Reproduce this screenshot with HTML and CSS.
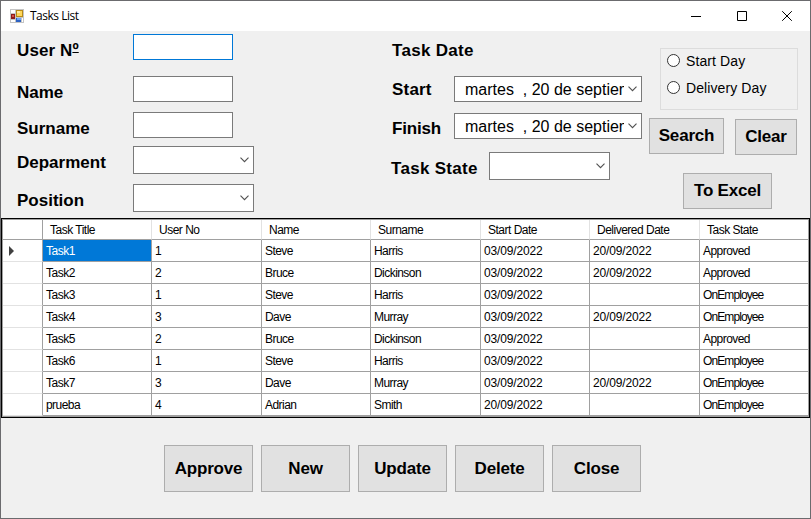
FILE: index.html
```html
<!DOCTYPE html>
<html lang="en">
<head>
<meta charset="utf-8">
<title>Tasks List</title>
<link rel="stylesheet" href="styles.css">
</head>
<body>
<div class="window">
  <header class="titlebar">
    <svg class="app-icon" width="14" height="14" viewBox="0 0 14 14" shape-rendering="crispEdges">
      <path fill="#c4c4c4" d="M0 0h14v14H0z"/>
      <path fill="#fff" d="M1 1h4v3H1zM1 11h4v2H1zM12 9h1v4h-1z"/>
      <path fill="#b88a16" d="M6 1h7v7H6z"/><path fill="#ffd75a" d="M7 2h5v5H7z"/><path fill="#ffeaa0" d="M7 2h3v2H7z"/>
      <path fill="#8e1b1b" d="M1 5h4v5H1z"/><path fill="#d65145" d="M2 6h2v2H2z"/>
      <path fill="#2c62c4" d="M6 9h5v4H6z"/><path fill="#6fa4f5" d="M7 9h4v2H7z"/>
    </svg>
    <span class="title">Tasks List</span>
    <div class="controls">
      <svg width="10" height="10" viewBox="0 0 10 10"><path d="M0 5.5h10"/></svg>
      <svg width="10" height="10" viewBox="0 0 10 10"><path d="M.5.5h9v9h-9z"/></svg>
      <svg width="10" height="10" viewBox="0 0 10 10"><path d="M.2.2l9.6 9.6M9.8.2L.2 9.8"/></svg>
    </div>
  </header>

  <section class="filters">
    <div class="person">
      <div class="row r-user"><label>User N<span class="ord">º</span></label><div class="input focus"></div></div>
      <div class="row r-name"><label>Name</label><div class="input"></div></div>
      <div class="row r-surname"><label>Surname</label><div class="input"></div></div>
      <div class="row r-dep"><label>Deparment</label><div class="combo"><svg class="chev" width="9" height="6" viewBox="0 0 9 6"><path d="M.5.7l4 4 4-4"/></svg></div></div>
      <div class="row r-pos"><label>Position</label><div class="combo"><svg class="chev" width="9" height="6" viewBox="0 0 9 6"><path d="M.5.7l4 4 4-4"/></svg></div></div>
    </div>
    <div class="dates">
      <div class="heading">Task Date</div>
      <div class="row r-start"><label>Start</label><div class="date"><span>martes  , 20 de septiem</span><svg class="chev" width="9" height="6" viewBox="0 0 9 6"><path d="M.5.7l4 4 4-4"/></svg></div></div>
      <div class="row r-finish"><label>Finish</label><div class="date"><span>martes  , 20 de septiem</span><svg class="chev" width="9" height="6" viewBox="0 0 9 6"><path d="M.5.7l4 4 4-4"/></svg></div></div>
      <div class="row r-state"><label>Task State</label><div class="combo"><svg class="chev" width="9" height="6" viewBox="0 0 9 6"><path d="M.5.7l4 4 4-4"/></svg></div></div>
    </div>
    <div class="actions">
      <div class="radios">
        <div class="radio"><i></i><span>Start Day</span></div>
        <div class="radio"><i></i><span>Delivery Day</span></div>
      </div>
      <div class="pair"><button class="search">Search</button><button class="clear">Clear</button></div>
      <button class="excel">To Excel</button>
    </div>
  </section>

  <section class="grid-frame">
    <table class="grid">
      <colgroup><col class="c-mark"><col class="c-title"><col class="c-no"><col class="c-title"><col class="c-no"><col class="c-title"><col class="c-no"><col class="c-title"></colgroup>
      <thead><tr><th></th><th>Task Title</th><th>User No</th><th>Name</th><th>Surname</th><th>Start Date</th><th>Delivered Date</th><th>Task State</th></tr></thead>
      <tbody>
        <tr><td class="mark"><svg width="5" height="10" viewBox="0 0 5 10"><path d="M0 0l5 5-5 5z" fill="#404040"/></svg></td><td class="task selected">Task1</td><td>1</td><td>Steve</td><td>Harris</td><td class="day">03/09/2022</td><td class="day">20/09/2022</td><td class="state">Approved</td></tr>
        <tr><td class="mark"></td><td class="task">Task2</td><td>2</td><td>Bruce</td><td>Dickinson</td><td class="day">03/09/2022</td><td class="day">20/09/2022</td><td class="state">Approved</td></tr>
        <tr><td class="mark"></td><td class="task">Task3</td><td>1</td><td>Steve</td><td>Harris</td><td class="day">03/09/2022</td><td></td><td class="state emp">OnEmployee</td></tr>
        <tr><td class="mark"></td><td class="task">Task4</td><td>3</td><td>Dave</td><td>Murray</td><td class="day">03/09/2022</td><td class="day">20/09/2022</td><td class="state emp">OnEmployee</td></tr>
        <tr><td class="mark"></td><td class="task">Task5</td><td>2</td><td>Bruce</td><td>Dickinson</td><td class="day">03/09/2022</td><td></td><td class="state">Approved</td></tr>
        <tr><td class="mark"></td><td class="task">Task6</td><td>1</td><td>Steve</td><td>Harris</td><td class="day">03/09/2022</td><td></td><td class="state emp">OnEmployee</td></tr>
        <tr><td class="mark"></td><td class="task">Task7</td><td>3</td><td>Dave</td><td>Murray</td><td class="day">03/09/2022</td><td class="day">20/09/2022</td><td class="state emp">OnEmployee</td></tr>
        <tr><td class="mark"></td><td>prueba</td><td>4</td><td>Adrian</td><td>Smith</td><td class="day">20/09/2022</td><td></td><td class="state emp">OnEmployee</td></tr>
      </tbody>
    </table>
  </section>

  <footer class="commands">
    <button>Approve</button><button>New</button><button>Update</button><button>Delete</button><button>Close</button>
  </footer>
</div>
</body>
</html>
```

FILE: styles.css
```css
* { box-sizing: border-box; }
body { margin: 0; overflow: hidden; font-family: "Liberation Sans", Arial, sans-serif; color: #000; }
.window { width: 811px; height: 519px; background: #f0f0f0; border: 1px solid #6b6b6e; }

.titlebar { height: 30px; background: #fff; display: flex; align-items: center; padding: 0 18px 0 9px; }
.title { margin-left: 6px; font: 12px/16px "Open Sans", sans-serif; letter-spacing: -0.5px; }
.controls { margin-left: auto; display: flex; gap: 35.5px; }
.controls svg { fill: none; stroke: #000; }

.filters { height: 187px; display: flex; }
.row { display: flex; }
label, .heading { font-size: 17px; line-height: 20px; font-weight: bold; white-space: nowrap; }
.ord { text-decoration: underline; text-decoration-thickness: 1px; text-underline-offset: -4px; text-decoration-skip-ink: none; }
.person { width: 374px; padding: 3px 0 0 16px; }
.person label { width: 116px; height: 26px; padding-top: 7px; }
.r-user label { letter-spacing: 0.1px; }
.input { width: 100px; height: 26px; background: #fff; border: 1px solid #7a7a7a; }
.input.focus { border-color: #0078d7; }
.r-user { height: 26px; }
.r-name { margin-top: 16px; }
.r-surname { margin-top: 10px; }
.row.r-name, .row.r-surname { height: 26px; }
.r-dep { margin-top: 8px; }
.r-pos { margin-top: 10px; }
.combo { width: 121px; height: 28px; background: #fff; border: 1px solid #7a7a7a; display: flex; align-items: center; justify-content: flex-end; padding-right: 4px; }
.chev { flex: none; fill: none; stroke: #505050; stroke-width: 1.1; }

.dates { width: 274px; padding: 10px 0 0 17px; }
.heading { letter-spacing: 0.3px; }
.dates label { width: 62px; letter-spacing: 0.2px; }
.r-start { margin-top: 15px; }
.r-start label { padding-top: 4px; }
.r-finish { margin-top: 11px; }
.r-finish label { padding-top: 6px; letter-spacing: -0.2px; }
.r-state { margin-top: 13px; margin-left: -1px; }
.r-state label { width: 98px; padding-top: 7px; letter-spacing: 0.3px; }
.date { width: 188px; height: 26px; background: #fff; border: 1px solid #7a7a7a; display: flex; align-items: center; justify-content: space-between; padding: 0 4px 0 10px; }
.date span { width: 159px; overflow: hidden; white-space: pre; font-size: 16px; line-height: 20px; padding-top: 1px; }

.actions { flex: 1; padding-top: 17px; }
.radios { width: 138px; height: 62px; margin-left: 11px; border: 1px solid #dcdcdc; padding: 1px 0 0 6px; }
.radio { height: 20px; display: flex; align-items: center; font-size: 14px; }
.radio + .radio { margin-top: 7px; }
.radio i { width: 13px; height: 13px; border: 1px solid #333; border-radius: 50%; background: #fff; }
.radio span { margin-left: 6px; padding-top: 1px; letter-spacing: 0.1px; }
button { border: 1px solid #adadad; background: #e1e1e1; color: #000; padding: 0; font: bold 17px/20px "Liberation Sans", Arial, sans-serif; letter-spacing: -0.2px; }
.pair { display: flex; gap: 11px; margin-top: 8px; }
.search { width: 75px; height: 36px; }
.clear { width: 62px; height: 36px; margin-top: 1px; }
.excel { display: block; width: 89px; height: 36px; margin: 18px 0 0 34px; }

.grid-frame { width: 809px; height: 200px; border: 1px solid #000; background: #a0a0a0; padding: 1px 0 0 1px; }
.grid { width: 806px; table-layout: fixed; border-collapse: separate; border-spacing: 0; background: #fff; font-size: 12px; line-height: 14px; letter-spacing: -0.55px; }
.c-mark { width: 40px; }
.c-title { width: 109px; }
.c-no { width: 110px; }
th { height: 20px; padding: 0 0 0 7px; text-align: left; font-weight: normal; white-space: nowrap; border-right: 1px solid #e2e2e2; border-bottom: 1px solid #a0a0a0; letter-spacing: -0.5px; }
th:first-child, th:last-child { border-right-color: #a0a0a0; }
td { height: 22px; padding: 0 0 0 3px; white-space: nowrap; border-right: 1px solid #a0a0a0; border-bottom: 1px solid #a0a0a0; }
td.mark { padding: 0 0 0 6px; border-bottom-color: #e2e2e2; }
td.mark svg { display: block; }
.task { letter-spacing: -0.5px; }
.selected { background: #0078d7; color: #fff; }
.day { letter-spacing: -0.15px; }
.emp { letter-spacing: -0.9px; }

.commands { display: flex; gap: 8px; padding: 27px 0 0 163px; }
.commands button { width: 89px; height: 47px; }
```
